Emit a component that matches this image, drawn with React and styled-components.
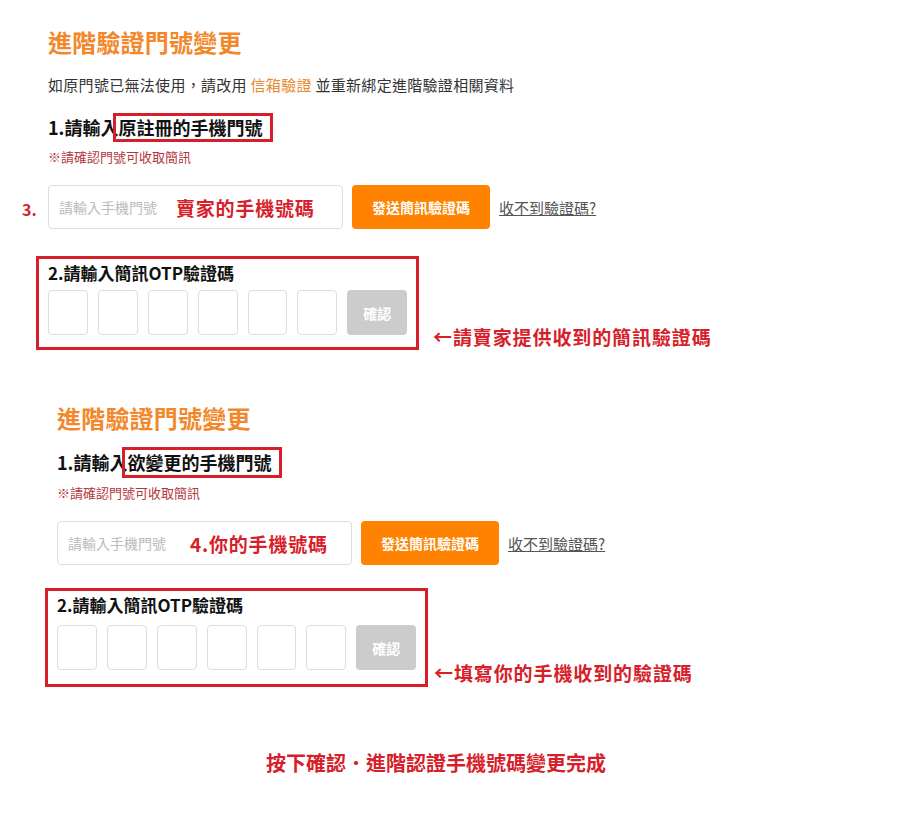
import React from "react";
import styled, { createGlobalStyle } from "styled-components";

const GlobalStyle = createGlobalStyle`
  body {
    margin: 0;
    background: #ffffff;
    font-family: "Noto Sans CJK TC", "Noto Sans", sans-serif;
    color: #222222;
  }
`;

const Page = styled.div`
  width: 900px;
  height: 818px;
  padding-top: 25px;
  box-sizing: border-box;
  overflow: hidden;
`;

const Section = styled.div`
  margin-left: ${props => props.left}px;
  margin-top: ${props => props.top || 0}px;
  display: flex;
  flex-direction: column;
`;

const Title = styled.h1`
  margin: 0;
  font-size: 24px;
  line-height: 34px;
  font-weight: 700;
  color: #f2882a;
  letter-spacing: 0.2px;
`;

const Description = styled.p`
  margin: 15px 0 0;
  font-size: 15px;
  line-height: 22px;
  color: #333333;
  letter-spacing: 0.3px;

  span {
    color: #e8892e;
  }
`;

const StepHeading = styled.h2`
  margin: ${props => props.gap}px 0 0;
  font-size: 18px;
  line-height: 29px;
  font-weight: 700;
  color: #111111;
  display: flex;
  align-items: center;
`;

const Highlight = styled.span`
  display: inline-block;
  margin-left: -5px;
  padding: 0 8px 0 2px;
  border: 3px solid #d71f2b;
  line-height: ${props => props.h}px;
`;

const Notice = styled.p`
  margin: 6px 0 0;
  font-size: 13px;
  line-height: 18px;
  color: #b3373d;
`;

const InputRow = styled.div`
  margin-top: 19px;
  display: flex;
  align-items: center;
  position: relative;
`;

const StepMark = styled.span`
  position: absolute;
  left: -26px;
  top: 12px;
  font-size: 16px;
  font-weight: 700;
  color: #d71f2b;
`;

const Field = styled.div`
  width: 295px;
  height: 44px;
  box-sizing: border-box;
  border: 1px solid #dddddd;
  border-radius: 4px;
  padding-left: 10px;
  display: flex;
  align-items: center;
  gap: ${props => props.gap}px;
`;

const Placeholder = styled.span`
  font-size: 14px;
  color: #bbbbbb;
`;

const FieldNote = styled.span`
  font-size: 19px;
  font-weight: 700;
  color: #d71f2b;
  letter-spacing: 0.8px;
`;

const SendButton = styled.button`
  margin-left: 9px;
  width: 138px;
  height: 44px;
  border: none;
  border-radius: 4px;
  background: #ff8300;
  color: #ffffff;
  font-family: inherit;
  font-size: 14px;
  font-weight: 700;
`;

const HelpLink = styled.a`
  margin-left: 9px;
  font-size: 15px;
  color: #555555;
  text-decoration: underline;
`;

const OtpRow = styled.div`
  margin-top: ${props => props.top}px;
  margin-left: -12px;
  display: flex;
  align-items: flex-end;
`;

const OtpBox = styled.div`
  border: 3px solid #d71f2b;
  padding: 3px 9px ${props => props.bottom}px 9px;
  width: 383px;
  box-sizing: border-box;
`;

const OtpHeading = styled.div`
  font-size: 17px;
  line-height: 22px;
  font-weight: 700;
  color: #111111;
`;

const Digits = styled.div`
  margin-top: ${props => props.gap}px;
  display: flex;
  gap: 10px;
`;

const Digit = styled.div`
  width: 40px;
  height: 45px;
  box-sizing: border-box;
  border: 1px solid #dddddd;
  border-radius: 4px;
`;

const ConfirmButton = styled.div`
  width: 60px;
  height: 45px;
  border-radius: 4px;
  background: #cccccc;
  color: #ffffff;
  font-size: 14px;
  font-weight: 700;
  display: flex;
  align-items: center;
  justify-content: center;
`;

const ArrowNote = styled.span`
  margin-left: ${props => props.gap}px;
  margin-bottom: ${props => props.bottom}px;
  font-size: 19px;
  line-height: 26px;
  font-weight: 700;
  color: #d71f2b;
  letter-spacing: 0.9px;
`;

const FinalNote = styled.p`
  margin: 63px 0 0 266px;
  font-size: 20px;
  line-height: 26px;
  font-weight: 700;
  color: #d71f2b;
`;

function OtpBlock({ top, bottom, gap, noteGap, noteBottom, note }) {
  return (
    <OtpRow top={top}>
      <OtpBox bottom={bottom}>
        <OtpHeading>2.請輸入簡訊OTP驗證碼</OtpHeading>
        <Digits gap={gap}>
          {[0, 1, 2, 3, 4, 5].map(i => (
            <Digit key={i} />
          ))}
          <ConfirmButton>確認</ConfirmButton>
        </Digits>
      </OtpBox>
      <ArrowNote gap={noteGap} bottom={noteBottom}>
        ←{note}
      </ArrowNote>
    </OtpRow>
  );
}

export default function App() {
  return (
    <Page>
      <GlobalStyle />
      <Section left={48}>
        <Title>進階驗證門號變更</Title>
        <Description>
          如原門號已無法使用，請改用 <span>信箱驗證</span> 並重新綁定進階驗證相關資料
        </Description>
        <StepHeading gap={17}>
          1.請輸入<Highlight h={23}>原註冊的手機門號</Highlight>
        </StepHeading>
        <Notice>※請確認門號可收取簡訊</Notice>
        <InputRow>
          <StepMark>3.</StepMark>
          <Field gap={19}>
            <Placeholder>請輸入手機門號</Placeholder>
            <FieldNote>賣家的手機號碼</FieldNote>
          </Field>
          <SendButton>發送簡訊驗證碼</SendButton>
          <HelpLink>收不到驗證碼?</HelpLink>
        </InputRow>
        <OtpBlock
          top={27}
          bottom={12}
          gap={6}
          noteGap={14}
          noteBottom={0}
          note="請賣家提供收到的簡訊驗證碼"
        />
      </Section>

      <Section left={57} top={51}>
        <Title>進階驗證門號變更</Title>
        <StepHeading gap={12}>
          1.請輸入<Highlight h={25}>欲變更的手機門號</Highlight>
        </StepHeading>
        <Notice>※請確認門號可收取簡訊</Notice>
        <InputRow>
          <Field gap={24}>
            <Placeholder>請輸入手機門號</Placeholder>
            <FieldNote>4.你的手機號碼</FieldNote>
          </Field>
          <SendButton>發送簡訊驗證碼</SendButton>
          <HelpLink>收不到驗證碼?</HelpLink>
        </InputRow>
        <OtpBlock
          top={23}
          bottom={14}
          gap={9}
          noteGap={6}
          noteBottom={1}
          note="填寫你的手機收到的驗證碼"
        />
      </Section>

      <FinalNote>按下確認．進階認證手機號碼變更完成</FinalNote>
    </Page>
  );
}
